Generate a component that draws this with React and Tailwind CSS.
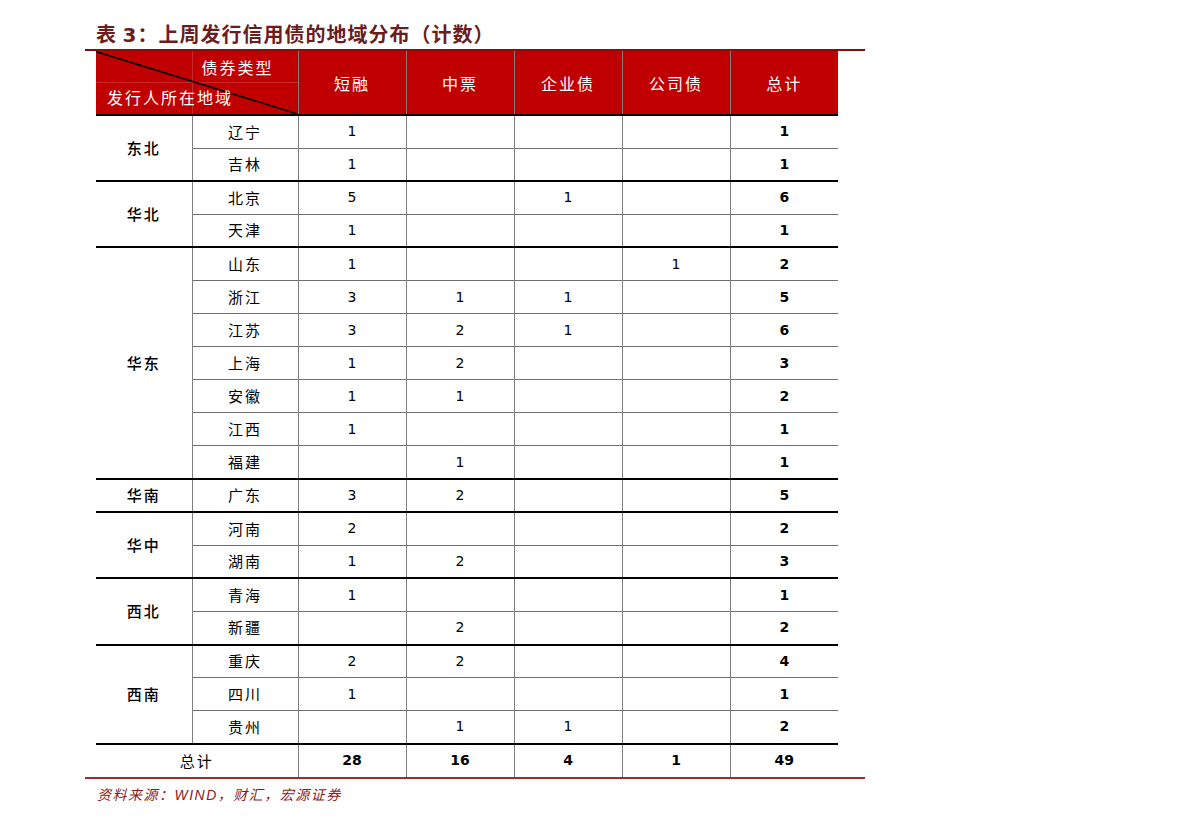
import React from 'react';

const CJK = { fontFamily: '"Noto Sans CJK SC", sans-serif' };

const groups = [
    { region: '东北', rows: [['辽宁', 1, '', '', '', 1], ['吉林', 1, '', '', '', 1]] },
    { region: '华北', rows: [['北京', 5, '', 1, '', 6], ['天津', 1, '', '', '', 1]] },
    {
        region: '华东',
        rows: [
            ['山东', 1, '', '', 1, 2],
            ['浙江', 3, 1, 1, '', 5],
            ['江苏', 3, 2, 1, '', 6],
            ['上海', 1, 2, '', '', 3],
            ['安徽', 1, 1, '', '', 2],
            ['江西', 1, '', '', '', 1],
            ['福建', '', 1, '', '', 1],
        ],
    },
    { region: '华南', rows: [['广东', 3, 2, '', '', 5]] },
    { region: '华中', rows: [['河南', 2, '', '', '', 2], ['湖南', 1, 2, '', '', 3]] },
    { region: '西北', rows: [['青海', 1, '', '', '', 1], ['新疆', '', 2, '', '', 2]] },
    {
        region: '西南',
        rows: [['重庆', 2, 2, '', '', 4], ['四川', 1, '', '', '', 1], ['贵州', '', 1, 1, '', 2]],
    },
];

const headers = ['短融', '中票', '企业债', '公司债', '总计'];
const totals = [28, 16, 4, 1, 49];

const App = () => {
    return (
        <div className="w-[1191px] h-[824px] bg-white pl-[85px] pt-[20px]">
            <div className="w-[780px]">
                {/* Title */}
                <div
                    className="h-[29px] pl-[11px] text-[20px] leading-[28px] font-bold text-[#6b1d1d] tracking-[1px]"
                    style={CJK}
                >
                    表 <span style={{ fontFamily: '"DejaVu Sans", sans-serif' }}>3</span>：上周发行信用债的地域分布（计数）
                </div>
                <div className="h-[2px] bg-[#8b0a0a]" />

                {/* Table */}
                <table className="ml-[11px] w-[742px] table-fixed border-collapse">
                    <colgroup>
                        <col className="w-[96px]" />
                        <col className="w-[106px]" />
                        <col className="w-[108px]" />
                        <col className="w-[108px]" />
                        <col className="w-[108px]" />
                        <col className="w-[108px]" />
                        <col className="w-[108px]" />
                    </colgroup>
                    <thead>
                        <tr className="h-[63px] bg-[#c00000] text-white text-[16px]" style={CJK}>
                            <th colSpan={2} className="relative p-0 font-normal">
                                <div className="absolute left-[96px] top-0 bottom-0 w-px bg-[#cc2a2a]" />
                                <div className="absolute left-0 right-0 top-[31px] h-px bg-[#cc2a2a]" />
                                <svg
                                    className="absolute inset-0 w-full h-full"
                                    viewBox="0 0 100 100"
                                    preserveAspectRatio="none"
                                >
                                    <line x1="0" y1="1" x2="100" y2="100" stroke="#000" strokeWidth="1.6" vectorEffect="non-scaling-stroke" />
                                </svg>
                                <div className="relative flex flex-col h-[63px] tracking-[2px]">
                                    <div className="flex justify-end pr-[24px] pt-[4px] leading-[24px]">债券类型</div>
                                    <div className="flex justify-start pl-[11px] pt-[6px] leading-[24px]">发行人所在地域</div>
                                </div>
                            </th>
                            {headers.map((h) => (
                                <th key={h} className="p-0 font-normal border-l border-l-[#7f7f7f] tracking-[2px]">
                                    {h}
                                </th>
                            ))}
                        </tr>
                    </thead>
                    <tbody className="text-black">
                        {groups.map((g) =>
                            g.rows.map((r, i) => {
                                const top = i === 0 ? 'border-t-2 border-t-black' : 'border-t border-t-[#6f6f6f]';
                                return (
                                    <tr key={r[0]} className="h-[33.1px]">
                                        {i === 0 && (
                                            <td
                                                rowSpan={g.rows.length}
                                                className="border-t-2 border-t-black text-center text-[15px] font-medium tracking-[2px] p-0"
                                                style={CJK}
                                            >
                                                {g.region}
                                            </td>
                                        )}
                                        <td
                                            className={`${top} border-l border-l-[#7f7f7f] text-center text-[15px] tracking-[2px] p-0`}
                                            style={CJK}
                                        >
                                            {r[0]}
                                        </td>
                                        {r.slice(1).map((v, j) => (
                                            <td
                                                key={j}
                                                className={`${top} border-l border-l-[#7f7f7f] text-center text-[14px] p-0 ${j === 4 ? 'font-bold' : ''}`}
                                                style={{ fontFamily: '"DejaVu Sans", sans-serif' }}
                                            >
                                                {v}
                                            </td>
                                        ))}
                                    </tr>
                                );
                            })
                        )}
                        <tr className="h-[33px]">
                            <td
                                colSpan={2}
                                className="border-t-2 border-t-black text-center text-[15px] tracking-[2px] p-0"
                                style={CJK}
                            >
                                总计
                            </td>
                            {totals.map((v, j) => (
                                <td
                                    key={j}
                                    className="border-t-2 border-t-black border-l border-l-[#7f7f7f] text-center text-[14px] font-bold p-0"
                                    style={{ fontFamily: '"DejaVu Sans", sans-serif' }}
                                >
                                    {v}
                                </td>
                            ))}
                        </tr>
                    </tbody>
                </table>
                <div className="h-[2px] bg-[#a52a2a]" />

                {/* Source note */}
                <div
                    className="mt-[5px] pl-[12px] text-[14px] leading-[20px] italic tracking-[1.5px] text-[#8b1a1a]"
                    style={CJK}
                >
                    资料来源：<span style={{ fontFamily: '"Liberation Sans", sans-serif' }}>WIND</span>，财汇，宏源证券
                </div>
            </div>
        </div>
    );
};

export default App;
